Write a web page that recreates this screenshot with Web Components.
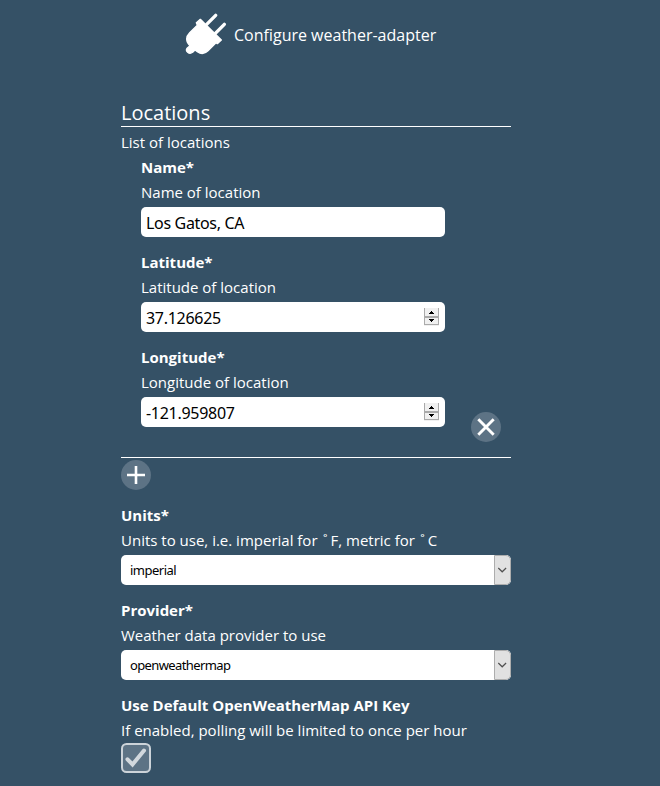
<!DOCTYPE html>
<html lang="en">
<head>
<meta charset="utf-8">
<title>Configure weather-adapter</title>
<style>
html,body{margin:0;background:#355166}
body{color:#fff;font-family:"Open Sans",sans-serif;font-size:15px;line-height:25px;height:786px;overflow:hidden}
</style>
</head>
<body>
<adapter-config></adapter-config>
<script>
const define = (name, html, render) => customElements.define(name, class extends HTMLElement {
  connectedCallback() {
    if (this.shadowRoot) return;
    const t = document.createElement('template');
    t.innerHTML = html;
    this.attachShadow({mode: 'open'}).append(t.content.cloneNode(true));
    if (render) render(this, this.shadowRoot);
  }
});

define('page-header', `<style>
:host{display:flex;align-items:flex-start;height:98px;box-sizing:border-box;padding:13px 0 0 185px;font-size:16px}
svg{width:42px;height:42px;flex:none}
span{display:block;margin:10px 0 0 7px;white-space:nowrap}
</style>
<svg viewBox="9 9 126 126" fill="#fff" stroke="#fff" stroke-linecap="round" stroke-linejoin="round">
<path d="M101 16 74 43M127 43 100 70" fill="none" stroke-width="10"/>
<path d="M55 28 118 90 106 101 102 98 78 122Q63 137 46 125L39 120 32 127Q24 133 17 127Q10 121 16 114L24 107Q14 98 14 87Q14 77 23 68L46 46 43 38Z" stroke-width="4"/>
</svg><span><slot></slot></span>`);

define('config-section', `<style>
:host{display:block}
h3{margin:0;height:29px;line-height:30px;border-bottom:1px solid #fff;font-size:20px;font-weight:400;box-sizing:border-box}
.desc{padding-top:3px}
.item{display:flex;justify-content:space-between;align-items:flex-end;padding:0 10px 15px 20px;height:303px;box-sizing:border-box;border-bottom:1px solid #fff}
.fields{width:304px;align-self:flex-start}
.foot{padding-top:2px}
</style><h3>Locations</h3><div class="desc">List of locations</div>
<div class="item"><div class="fields"><slot></slot></div><icon-button kind="remove"></icon-button></div>
<div class="foot"><icon-button kind="add"></icon-button></div>`);

define('icon-button', `<style>
:host{display:block;width:30px;height:30px}
svg{display:block}
</style><svg width="30" height="30" viewBox="0 0 30 30"><circle cx="15" cy="15" r="15" fill="#5d7385"/>
<path fill="none" stroke="#fff"/></svg>`, (el, r) => {
  const p = r.querySelector('path');
  const remove = el.getAttribute('kind') === 'remove';
  p.setAttribute('d', remove ? 'M7.3 7.3 22.7 22.7M22.7 7.3 7.3 22.7' : 'M15 6V24M6 15H24');
  p.setAttribute('stroke-width', remove ? 2.9 : 2.6);
});

define('form-field', `<style>
:host{display:block;height:95px}
b,.hint{display:block;height:25px;white-space:nowrap}
.ring{margin-left:1.6px;letter-spacing:3px}
.control{padding-top:2px}
</style><b></b><span class="hint"></span><div class="control"><slot></slot></div>`, (el, r) => {
  r.querySelector('b').textContent = el.getAttribute('label');
  const hint = r.querySelector('.hint');
  for (const part of el.getAttribute('hint').split(/(˚)/)) {
    if (part !== '˚') { hint.append(part); continue; }
    const ring = document.createElement('span');
    ring.className = 'ring';
    ring.textContent = part;
    hint.append(ring);
  }
});

define('text-box', `<style>
:host{display:flex;align-items:center;justify-content:space-between;height:30px;box-sizing:border-box;padding:1px 6px 0 5px;border-radius:5px;background:#fff;color:#000;font:16px/29px "Noto Sans",sans-serif}
span{letter-spacing:var(--ls,0);padding-top:2px}
svg{display:none;margin-top:-2px}
:host([spinner]) svg{display:block}
</style><span><slot></slot></span>
<svg width="15" height="18" viewBox="0 0 15 18" shape-rendering="crispEdges">
<rect width="15" height="18" fill="#f0f0f0"/><path d="M0 0H1V17H0ZM14 0H15V17H14ZM0 8H15V10H0ZM0 16H15V17H0Z" fill="#aaa"/>
<path d="M7 3H8V4H9V5H10V6H5V5H6V4H7ZM5 11H10V12H9V13H8V14H7V13H6V12H5Z" fill="#000"/></svg>`);

define('select-box', `<style>
:host{display:flex;justify-content:space-between;height:30px;border-radius:5px;background:#fff;color:#000;overflow:hidden;font:13px/31px "Noto Sans",sans-serif}
span{padding-left:9px;letter-spacing:var(--ls,0)}
i{box-sizing:border-box;width:17px;height:30px;border:1px solid #adadad;border-radius:0 5px 5px 0;background:#e1e1e1}
svg{display:block}
</style><span><slot></slot></span><i><svg width="15" height="28" viewBox="0 0 15 28"><path d="M3.3 12 7.2 15.8 11.1 12" fill="none" stroke="#505050" stroke-width="1.2"/></svg></i>`);

define('check-box', `<style>
:host{display:block;width:30px;height:30px;margin-top:-2px}
svg{display:block}
</style><svg width="30" height="30" viewBox="0 0 30 30"><rect x="1" y="1" width="28" height="28" rx="4.5" fill="#5d7385" stroke="#ccd3d9" stroke-width="2"/>
<path d="M6.5 16.3 11.5 21.5 23 7.5" fill="none" stroke="#d2d8dd" stroke-width="4" stroke-linecap="round"/></svg>`);

define('adapter-config', `<style>
:host{display:block}
main{width:390px;margin-left:121px}
.rest{padding-top:13px}
.name{--ls:-.33px}.num{--ls:-.28px}.sel{--ls:-.62px}.sel.short{--ls:-.5px}
</style>
<page-header>Configure weather-adapter</page-header>
<main>
<config-section>
<form-field label="Name*" hint="Name of location"><text-box class="name">Los Gatos, CA</text-box></form-field>
<form-field label="Latitude*" hint="Latitude of location"><text-box class="num" spinner>37.126625</text-box></form-field>
<form-field label="Longitude*" hint="Longitude of location"><text-box class="num" spinner>-121.959807</text-box></form-field>
</config-section>
<div class="rest">
<form-field label="Units*" hint="Units to use, i.e. imperial for ˚F, metric for ˚C"><select-box class="sel short">imperial</select-box></form-field>
<form-field label="Provider*" hint="Weather data provider to use"><select-box class="sel">openweathermap</select-box></form-field>
<form-field label="Use Default OpenWeatherMap API Key" hint="If enabled, polling will be limited to once per hour"><check-box></check-box></form-field>
</div>
</main>`);
</script>
</body>
</html>
